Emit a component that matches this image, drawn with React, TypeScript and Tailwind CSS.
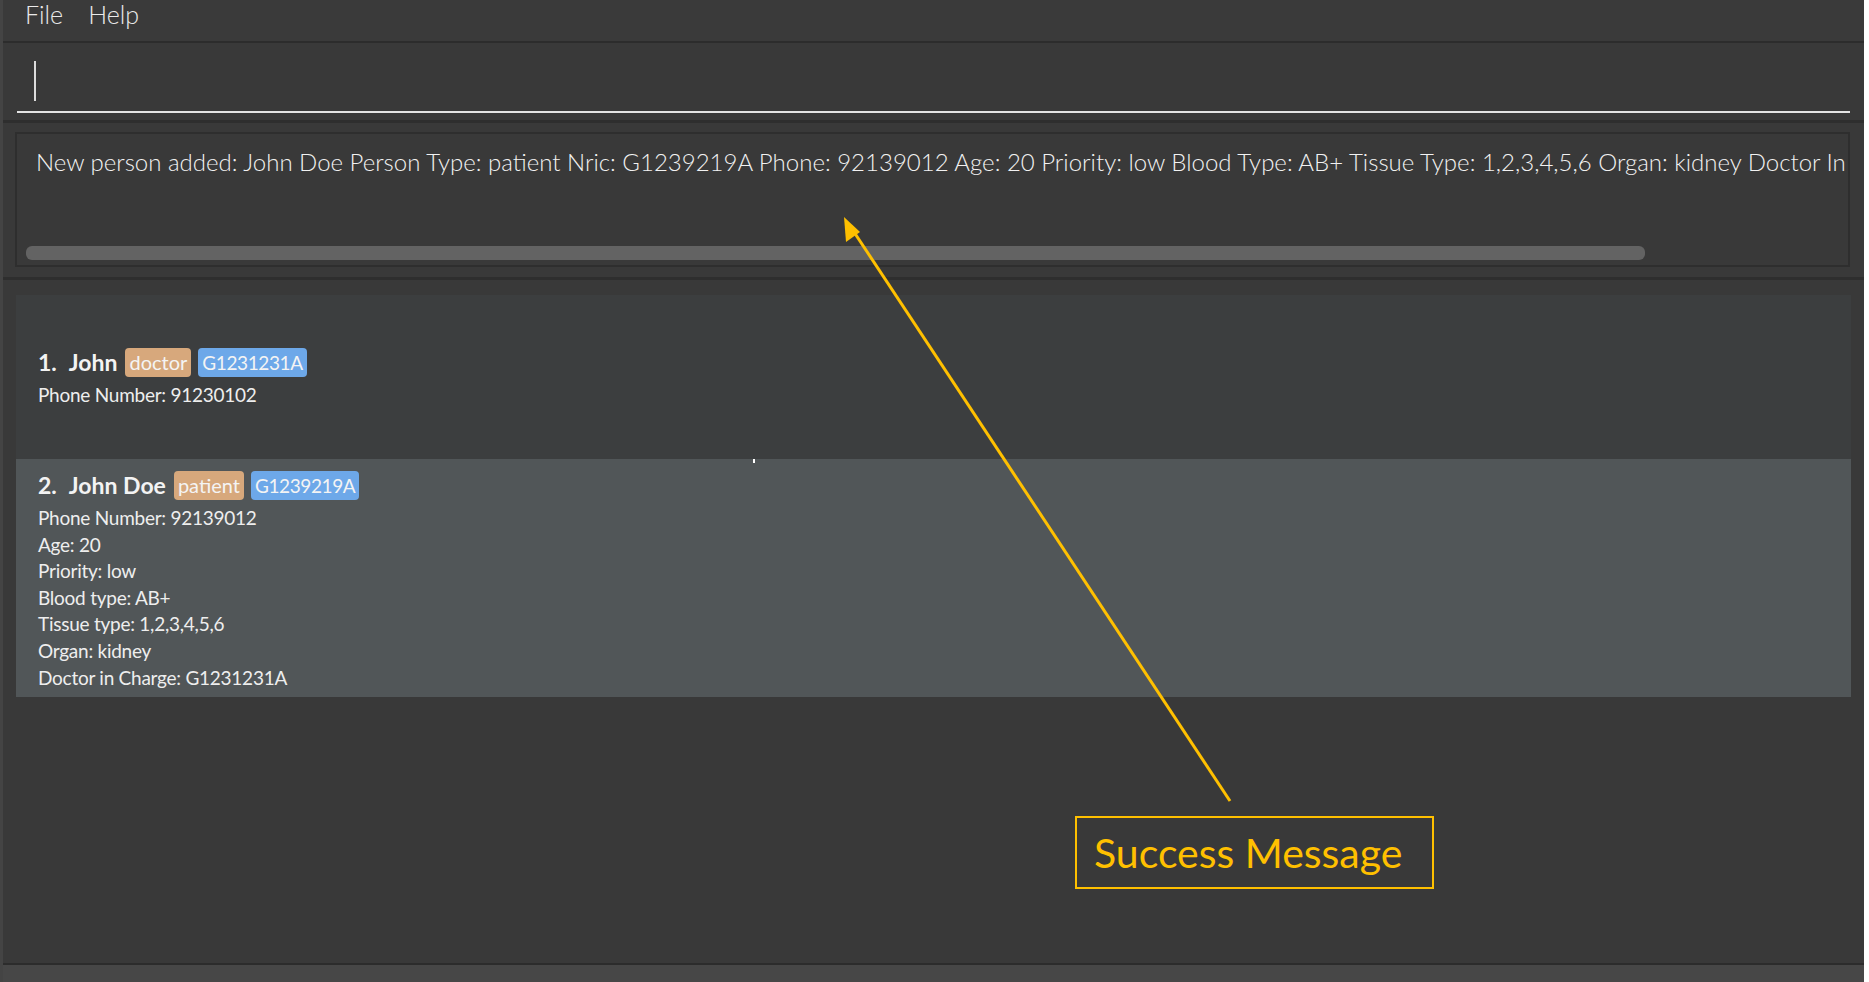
const patientLines = [
  "Phone Number: 92139012",
  "Age: 20",
  "Priority: low",
  "Blood type: AB+",
  "Tissue type: 1,2,3,4,5,6",
  "Organ: kidney",
  "Doctor in Charge: G1231231A",
];

const resultText =
  "New person added: John Doe Person Type: patient Nric: G1239219A Phone: 92139012 Age: 20 Priority: low Blood Type: AB+ Tissue Type: 1,2,3,4,5,6 Organ: kidney Doctor In Charge: G1231231A";

function Badge({ label, tone }: { label: string; tone: "orange" | "blue" }) {
  return (
    <span
      className={
        tone === "orange"
          ? "rounded-[4px] bg-[#d7a87c] px-[4px] text-[20px] leading-[29px] font-normal text-[#f4f4f4]"
          : "rounded-[4px] bg-[#6da8e9] px-[4px] text-[19px] leading-[29px] font-normal tracking-[-0.4px] text-[#f4f4f4]"
      }
    >
      {label}
    </span>
  );
}

export default function App() {
  return (
    <div className="relative flex h-[982px] w-[1869px] overflow-hidden bg-white font-['Lato',sans-serif] text-[#f0f0f0]">
      {/* left edge */}
      <div className="w-[3px] bg-[#444444]" />

      <div className="flex w-[1861px] flex-col bg-[#393939]">
        {/* Menu bar */}
        <div className="flex h-[41px] items-start gap-[25px] bg-[#3a3a3a] pl-[22px] text-[25px] leading-[28px] font-light text-[#eaeaea]">
          <span>File</span>
          <span>Help</span>
        </div>
        <div className="h-[2px] bg-[#2c2c2c]" />

        {/* Command box */}
        <div className="flex h-[77px] flex-col px-[14px]">
          <div className="ml-[17px] mt-[18px] h-[40px] w-[2px] bg-[#dcdcdc]" />
          <div className="mt-[10px] h-[2px] w-full bg-[#e4e4e4]" />
        </div>
        <div className="h-[3px] bg-[#2e2e2e]" />

        {/* Result display */}
        <div className="flex h-[154px] flex-col pl-[12px] pr-[14px] pt-[9px]">
          <div className="flex h-[135px] flex-col overflow-hidden border-2 border-[#2e2e2e]">
            <div className="overflow-hidden whitespace-nowrap pl-[19px] pt-[13px] text-[24px] leading-[30px] font-light text-[#f2f2f2]">
              {resultText}
            </div>
            <div className="mt-auto mb-[5px] ml-[9px] h-[14px] w-[1619px] rounded-[6px] bg-[#636363]" />
          </div>
        </div>
        <div className="h-[3px] bg-[#2e2e2e]" />

        {/* Person list */}
        <div className="flex flex-1 flex-col px-[13px] pt-[15px]">
          <div className="relative flex h-[164px] flex-col justify-center bg-[#3c3e3f] pl-[22px]">
            <div className="flex items-center gap-[7px] text-[23px] leading-[31px] font-bold text-[#f3f3f3]">
              <span className="mr-[1px] flex gap-[12px]">
                <span>1.</span>
                <span>John</span>
              </span>
              <Badge label="doctor" tone="orange" />
              <Badge label="G1231231A" tone="blue" />
            </div>
            <div className="mt-[4px] text-[19px] leading-[26px] tracking-[-0.25px] text-[#eeeeee]">Phone Number: 91230102</div>
            <div className="absolute bottom-[-4px] left-[737px] h-[4px] w-[2px] bg-white" />
          </div>
          <div className="flex h-[238px] flex-col bg-[#515658] pl-[22px] pt-[11px]">
            <div className="flex items-center gap-[7px] text-[23px] leading-[31px] font-bold text-[#f3f3f3]">
              <span className="mr-[1px] flex gap-[12px]">
                <span>2.</span>
                <span>John Doe</span>
              </span>
              <Badge label="patient" tone="orange" />
              <Badge label="G1239219A" tone="blue" />
            </div>
            <div className="mt-[4px] flex flex-col text-[19px] leading-[26.6px] tracking-[-0.25px] text-[#eeeeee]">
              {patientLines.map((line) => (
                <span key={line}>{line}</span>
              ))}
            </div>
          </div>
        </div>

        {/* Status bar */}
        <div className="h-[19px] border-t-2 border-[#2c2c2c] bg-[#474747]" />
      </div>

      {/* Annotation */}
      <svg className="pointer-events-none absolute left-0 top-0" width="1869" height="982">
        <line x1="1230" y1="801" x2="852" y2="229" stroke="#FFC000" strokeWidth="3" />
        <polygon points="844,217 846,242 860,232" fill="#FFC000" />
      </svg>
      <div className="absolute left-[1075px] top-[816px] flex h-[73px] w-[359px] items-center border-2 border-[#FFC000] pl-[17px] text-[41px] leading-[50px] text-[#FFC000]">
        Success Message
      </div>
    </div>
  );
}
